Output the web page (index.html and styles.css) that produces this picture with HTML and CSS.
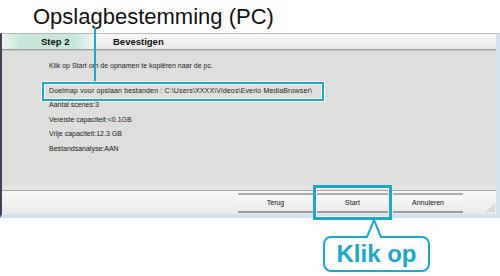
FILE: index.html
```html
<!DOCTYPE html>
<html lang="nl">
<head>
    <meta charset="UTF-8">
    <meta name="viewport" content="width=device-width, initial-scale=1.0">
    <title>Opslagbestemming (PC)</title>
    <link rel="stylesheet" href="styles.css">
</head>
<body>
    <div class="page">
        <h1 class="caption">Opslagbestemming (PC)</h1>
        <div class="window">
            <div class="tabs">
                <span class="tab active">Step 2</span>
                <span class="tab">Bevestigen</span>
            </div>
            <div class="content">
                <p class="intro">Klik op Start om de opnamen te kopiëren naar de pc.</p>
                <ul class="details">
                    <li class="dest">Doelmap voor opslaan bestanden : C:\Users\XXXX\Videos\Everio MediaBrowser\</li>
                    <li>Aantal scenes:3</li>
                    <li>Vereiste capaciteit:&lt;0.1GB</li>
                    <li>Vrije capaciteit:12.3 GB</li>
                    <li>Bestandsanalyse:AAN</li>
                </ul>
            </div>
            <div class="footer">
                <button class="btn back">Terug</button>
                <button class="btn start">Start</button>
                <button class="btn cancel">Annuleren</button>
                <svg class="grip" width="11" height="11" viewBox="0 0 11 11">
                    <path d="M10 2 L2 10 M10 5 L5 10 M10 8 L8 10" stroke="#b5b5b5" stroke-width="1"/>
                </svg>
            </div>
        </div>

        <!-- annotations -->
        <div class="leader"></div>
        <div class="callout">
            <svg class="pointer" width="16" height="21" viewBox="0 0 16 21">
                <rect x="2" y="16" width="12" height="5" fill="#fff"/>
                <path d="M1 19 L8 2 L15 19" fill="#fff" stroke="#1aa8cb" stroke-width="2"/>
            </svg>
            Klik op
        </div>
    </div>
</body>
</html>
```

FILE: styles.css
```css
body {
    margin: 0;
    background: #fff;
    font-family: "Liberation Sans", Arial, sans-serif;
}
.page {
    position: relative;
    width: 500px;
    height: 276px;
}
.caption {
    margin: 0;
    padding-left: 33px;
    font-size: 22px;
    font-weight: normal;
    line-height: 33px;
    color: #111;
}
.window {
    display: flex;
    flex-direction: column;
    width: 500px;
    box-sizing: border-box;
    border-top: 1px solid #b9b9b9;
    border-left: 2px solid #3d4455;
    border-right: 4px solid #d5e2ed;
    border-bottom: 4px solid #d5e2ed;
}
.tabs {
    display: flex;
    height: 15px;
    background: linear-gradient(#f7f8f7, #e8e9e8);
    border-bottom: 1px solid #9f9f9f;
    box-shadow: 0 1px 0 #c6c6c6;
    margin-bottom: 1px;
    font-size: 9.5px;
    font-weight: bold;
    line-height: 15px;
    color: #111;
}
.tab {
    padding-left: 21px;
}
.tab.active {
    width: 88px;
    box-sizing: border-box;
    margin-left: 2px;
    padding-left: 37px;
    background: linear-gradient(to right, #e4f3ed, #c6e8da 20%, #c6e8da 80%, #e9f3ef);
}
.content {
    height: 134px;
    padding-left: 47px;
    background: #dededc;
    border-bottom: 5px solid #e5e6e4;
    font-size: 7px;
    color: #222;
}
.intro {
    margin: 0;
    padding-top: 8px;
    line-height: 14.6px;
}
.details {
    list-style: none;
    margin: 10px 0 0;
    padding: 0;
}
.details li {
    line-height: 14.6px;
}
.dest {
    position: relative;
    letter-spacing: 0.15px;
}
.dest::after {
    content: "";
    position: absolute;
    left: -7px;
    top: -2px;
    width: 282px;
    height: 19px;
    box-sizing: border-box;
    border: 2px solid #1aa8cb;
    box-shadow: inset 0 0 0 1px #fff, 0 0 0 1px #fff;
}
.footer {
    display: flex;
    align-items: center;
    height: 23px;
    padding-left: 236px;
    border-top: 1px solid #a6a6a6;
    background: linear-gradient(#f6f7f6, #e9eae9);
}
.btn {
    position: relative;
    height: 20px;
    padding: 0;
    border: none;
    border-top: 2px solid #acacac;
    border-bottom: 2px solid #9b9b9b;
    background: linear-gradient(#f8f8f8, #ebebeb);
    font-family: "Liberation Sans", Arial, sans-serif;
    font-size: 7px;
    color: #111;
}
.back {
    width: 75px;
}
.start {
    width: 71px;
    margin-left: 4px;
}
.start::after {
    content: "";
    position: absolute;
    left: -4px;
    right: -4px;
    top: -10px;
    bottom: -9px;
    border: 3px solid #1aa8cb;
    box-shadow: inset 0 0 0 1px #fff;
}
.cancel {
    width: 70px;
    margin-left: 5px;
}
.grip {
    margin-left: auto;
    align-self: flex-end;
    margin-bottom: 1px;
}
.leader {
    position: absolute;
    left: 94px;
    top: 27px;
    width: 2px;
    height: 54px;
    background: #1aa8cb;
}
.callout {
    position: absolute;
    left: 323px;
    top: 236px;
    width: 107px;
    height: 36px;
    box-sizing: border-box;
    border: 2px solid #1aa8cb;
    border-radius: 8px;
    background: #fff;
    font-size: 24px;
    font-weight: bold;
    line-height: 32px;
    text-align: center;
    color: #1aa8cb;
}
.pointer {
    position: absolute;
    left: 41px;
    top: -20px;
}
```
